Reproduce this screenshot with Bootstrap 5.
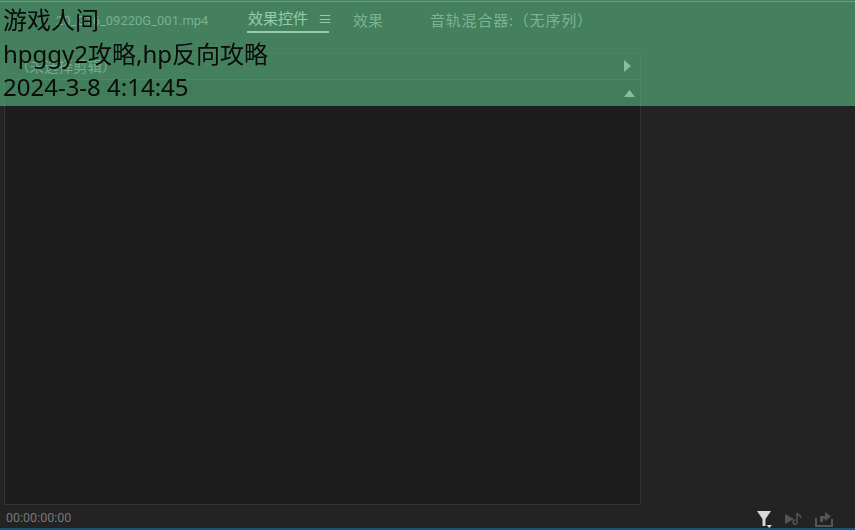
<!DOCTYPE html>
<html lang="zh">
<head>
    <meta charset="UTF-8">
    <meta name="viewport" content="width=device-width, initial-scale=1.0">
    <title>游戏人间</title>
    <link href="https://cdn.jsdelivr.net/npm/bootstrap@5.3.2/dist/css/bootstrap.min.css" rel="stylesheet">
    <style>
        html, body { height: 100%; }
        body { background: #232323; overflow: hidden; font-family: "Noto Sans", "Noto Sans CJK SC", sans-serif; }
        .app-shell { height: 529px; margin-top: 1px; border-top: 1px solid #3c90e0; border-bottom: 2px solid #1d4f7c; }
        .tab-strip { height: 37px; padding-left: 16px; font-size: 15px; color: #a9a9a9; white-space: nowrap; }
        .clip-name { width: 231px; padding-left: 40px; font-size: 13px; color: #a0a0a0; font-family: "Roboto", "Noto Sans CJK SC", sans-serif; }
        .tab-active { width: 82px; margin-right: 24px; padding: 1px 0 2px 1px; line-height: 1.3; color: #e6e6e6; border-bottom: 2px solid #e6e6e6; }
        .tab-plain { width: 77px; }
        .tab-mixer { letter-spacing: .8px; }
        .menu-bars { font-size: 14px; margin-left: 10px; }
        .effect-panel { width: 637px; margin: 14px 0 0 4px; height: 453px; background: #1d1d1d; border: 1px solid #333; }
        .panel-row { height: 26px; padding: 0 9px 0 10px; background: #232323; border-bottom: 1px solid #383838; font-size: 14.5px; color: #9a9a9a; }
        .panel-row-empty { height: 27px; padding: 0 5px; }
        .panel-fill { min-height: 0; }
        .status-strip { height: 23px; padding: 4px 22px 0 6px; font-size: 13px; color: #777; }
        .status-time { font-family: "Roboto", sans-serif; font-size: 12.500px; }
        .tri-icon { fill: #c4c4c4; display: block; }
        .tool-icons { gap: 12px; }
        .tool-icons svg { display: block; }
        .banner { left: 0; top: 0; width: 855px; height: 106px; padding: 3px 0 0 3px; background: rgba(90,188,133,.6); color: #0b0b0b; font-family: "Noto Sans", "Noto Sans CJK SC", sans-serif; font-size: 24px; line-height: 33.5px; }
    </style>
</head>
<body>
    <div class="app-shell d-flex flex-column position-relative">
        <div class="tab-strip d-flex align-items-center">
            <div class="clip-name">20_G16_09220G_001.mp4</div>
            <div class="tab-active d-flex align-items-center">效果控件<span class="menu-bars">≡</span></div>
            <div class="tab-plain">效果</div>
            <div class="tab-mixer">音轨混合器:（无序列）</div>
        </div>
        <div class="effect-panel d-flex flex-column">
            <div class="panel-row d-flex align-items-center justify-content-between">
                <span>（未选择剪辑）</span>
                <svg class="tri-icon" width="7" height="12" viewBox="0 0 7 12"><polygon points="0,0 7,6 0,12"/></svg>
            </div>
            <div class="panel-row-empty d-flex align-items-center justify-content-end">
                <svg class="tri-icon" width="11" height="7" viewBox="0 0 11 7"><polygon points="5.5,0 11,7 0,7"/></svg>
            </div>
            <div class="panel-fill flex-grow-1"></div>
        </div>
        <div class="status-strip mt-auto d-flex align-items-center justify-content-between">
            <span class="status-time">00:00:00:00</span>
            <div class="tool-icons d-flex align-items-center">
                <svg width="15" height="18" viewBox="0 0 15 18"><polygon points="0,1 14,1 8.500,9 8.500,16 5.500,16 5.500,9" fill="#d8d8d8"/><polygon points="9.500,15 15,15 12.250,18" fill="#d8d8d8"/></svg>
                <svg width="19" height="16" viewBox="0 0 19 16"><polygon points="1,3 10,8 1,13" fill="#555"/><path d="M13 2v9a2 2 0 1 1-1.500-1.800M13 2c1 2 4 2.500 4 5" fill="none" stroke="#555" stroke-width="1.500"/></svg>
                <svg width="18" height="16" viewBox="0 0 18 16"><path d="M1 7v8h16V8" fill="none" stroke="#555" stroke-width="2"/><path d="M5 11V5h5V1l6 4.500-6 4.500V8H8v3z" fill="#555"/></svg>
            </div>
        </div>
        <div class="banner position-fixed">
            <div>游戏人间</div>
            <div>hpggy2攻略,hp反向攻略</div>
            <div>2024-3-8 4:14:45</div>
        </div>
    </div>
    <script src="https://cdn.jsdelivr.net/npm/bootstrap@5.3.2/dist/js/bootstrap.bundle.min.js"></script>
</body>
</html>
